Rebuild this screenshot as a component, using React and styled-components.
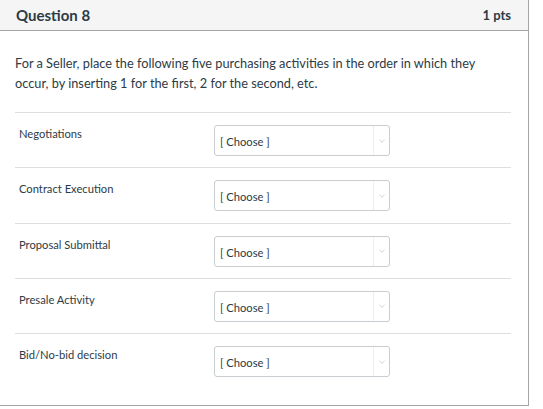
import React from "react";
import styled, { createGlobalStyle } from "styled-components";

const GlobalStyle = createGlobalStyle`
  body {
    margin: 0;
    background: #ffffff;
    font-family: Lato, "Open Sans", sans-serif;
    color: #2d3b45;
  }
`;

const Panel = styled.div`
  box-sizing: border-box;
  width: 530px;
  margin: -1px 0 0 -1px;
  border: 1px solid #a5a5a5;
  background: #ffffff;
`;

const Header = styled.div`
  height: 30px;
  display: flex;
  align-items: center;
  justify-content: space-between;
  padding: 0 17px 0 16px;
  background: #f5f5f5;
  border-bottom: 1px solid #a5a5a5;
`;

const Title = styled.h2`
  margin: 0;
  font-size: 15px;
  font-weight: 700;
`;

const Points = styled.span`
  font-size: 13px;
  font-weight: 700;
`;

const Body = styled.div`
  padding: 22px 17px 17px 15px;
`;

const Prompt = styled.p`
  margin: 0 0 19px;
  font-size: 12.75px;
  line-height: 20px;
`;

const Row = styled.div`
  box-sizing: border-box;
  height: 55.25px;
  display: flex;
  align-items: flex-start;
  border-top: 1px solid #dcdfe2;
`;

const Label = styled.div`
  width: 199px;
  padding: 14px 0 0 4px;
  box-sizing: border-box;
  font-size: 11.2px;
  line-height: 14px;
`;

const Select = styled.div`
  box-sizing: border-box;
  margin-top: 12px;
  width: 176px;
  height: 31px;
  display: flex;
  align-items: stretch;
  border: 1px solid #c7cdd1;
  border-radius: 3px;
  font-size: 11.2px;
`;

const Value = styled.span`
  flex: 1;
  display: flex;
  align-items: center;
  padding: 2px 0 0 5px;
`;

const Arrow = styled.span`
  width: 15px;
  display: flex;
  align-items: center;
  justify-content: center;
  border-left: 1px solid #eceef0;
`;

const items = [
  "Negotiations",
  "Contract Execution",
  "Proposal Submittal",
  "Presale Activity",
  "Bid/No-bid decision",
];

export default function App() {
  return (
    <>
      <GlobalStyle />
      <Panel>
        <Header>
          <Title>Question 8</Title>
          <Points>1 pts</Points>
        </Header>
        <Body>
          <Prompt>
            For a Seller, place the following five purchasing activities in the
            order in which they occur, by inserting 1 for the first, 2 for the
            second, etc.
          </Prompt>
          {items.map((item) => (
            <Row key={item}>
              <Label>{item}</Label>
              <Select>
                <Value>[ Choose ]</Value>
                <Arrow>
                  <svg width="6" height="4" viewBox="0 0 6 4">
                    <path d="M0.5 0.5 L3 3.5 L5.5 0.5" fill="none" stroke="#c7cdd1" strokeWidth="0.8" />
                  </svg>
                </Arrow>
              </Select>
            </Row>
          ))}
        </Body>
      </Panel>
    </>
  );
}
